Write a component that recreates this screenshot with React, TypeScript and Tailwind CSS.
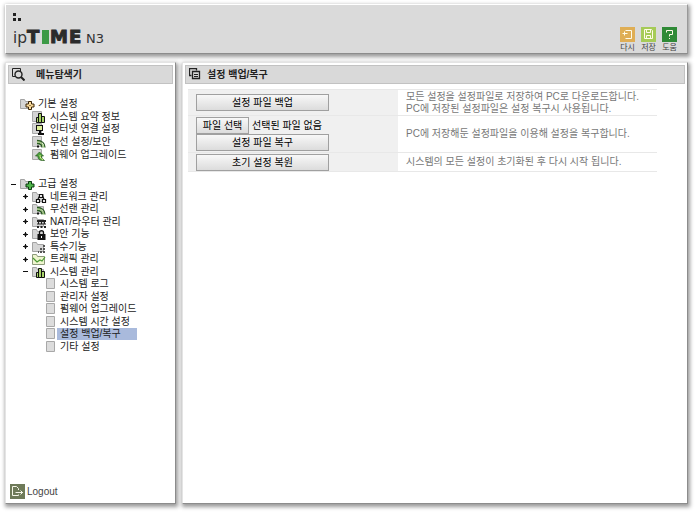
import type { ReactNode } from 'react';

const FONT = "font-['Liberation_Sans','Noto_Sans_CJK_KR',sans-serif]";

const Folder = () => (
  <path d="M.5 10.500v-9h4l1 2h6v7z" fill="#d5d5d5" stroke="#a3a3a3" />
);
const Sheet = () => <path d="M.5.500h9v10h-9z" fill="#d5d5d5" stroke="#a8a8a8" />;

function Bars() {
  return <path d="M4.500 11.500v-5h2v5zM6.500 11.500v-9h3v9zM9.500 11.500v-6h3v6z" fill="#a9d46a" stroke="#111" />;
}
function Waves() {
  return (
    <g fill="none" stroke="#2a5a22">
      <path d="M5 4.500c5 0 8 3 8 7M5 7.500c3 0 5 1.500 5 4" strokeWidth="1.300" />
      <path d="M5 6c4 0 6.500 2 6.500 5.500" stroke="#8fc95a" />
      <rect x="5" y="9.500" width="2" height="2" fill="#111" stroke="none" />
    </g>
  );
}

const glyphs: Record<string, ReactNode> = {
  basic: (
    <>
      <Folder />
      <path d="M8.500 3.500h3v2.500h2.500v3h-2.500v2.500h-3v-2.500H6v-3h2.500z" fill="#fbdc9c" stroke="#3a2508" />
      <path d="M9.500 7h1v1h-1z" fill="#3a2508" />
    </>
  ),
  advanced: (
    <>
      <Folder />
      <path d="M8.500 3.500h3v2.500h2.500v3h-2.500v2.500h-3v-2.500H6v-3h2.500z" fill="#4fb64a" stroke="#0d3b12" />
    </>
  ),
  summary: <><Sheet /><Bars /></>,
  internet: (
    <>
      <Sheet />
      <rect x="4.500" y="2.500" width="6" height="5" fill="#dff09a" stroke="#111" />
      <path d="M7 8h2v2h3v2H6v-2h1z" fill="#111" />
    </>
  ),
  wifiSetup: <><Sheet /><Waves /></>,
  firmware: (
    <>
      <Sheet />
      <path d="M7.500 3l4 4h-2c0 2 1 3 3 4.500-4 .5-7-1-6.500-4.500H3.500z" fill="#4fa33e" stroke="#24551c" strokeWidth=".7" />
      <path d="M8 6c0 2.500 1 4 3 5" stroke="#d8f08a" fill="none" />
    </>
  ),
  network: (
    <>
      <Folder />
      <path d="M7.500 3.500h3v3h-3zM4.500 8.500h3v3h-3zM10.500 8.500h3v3h-3zM6 8l1.500-3M12 8l-1.500-3" fill="#fff" stroke="#111" strokeWidth="1.200" />
    </>
  ),
  wireless: <><Folder /><Waves /></>,
  nat: (
    <>
      <Folder />
      <path d="M5 4h9v2H5zM5 7.500h9v1H5zM5 10h2v2H5zM8.500 10h2v2h-2zM12 10h2v2h-2zM6 6h1v2H6zM9 6h1v2H9zM12 6h1v2h-1z" fill="#222" />
    </>
  ),
  security: (
    <>
      <Folder />
      <path d="M7.500 6.500V4.500c0-2.500 4-2.500 4 0v2" fill="none" stroke="#111" strokeWidth="1.300" />
      <path d="M5.500 6h8v6h-8z" fill="#111" />
      <path d="M9 8h1v2H9z" fill="#fff" />
    </>
  ),
  special: (
    <>
      <Folder />
      <path d="M11 4h2v2h-2zM8 7h2v2H8zM11 7h2v2h-2zM6 10h1v2H6zM8 10h2v2H8zM11 10h2v2h-2z" fill="#555" />
    </>
  ),
  traffic: (
    <>
      <path d="M.5 11.500v-10h4l1 2h7v8z" fill="#eef5cf" stroke="#8c9a7a" />
      <path d="M1 5l4 4 3-2 2 1 3-4" fill="none" stroke="#4a9a32" strokeWidth="1.200" />
    </>
  ),
  system: <><Folder /><Bars /></>,
  page: <path d="M.5.500h8v10h-8z" fill="#dcdcdc" stroke="#a8a8a8" />,
};

type Node = { icon: string; label: string; level: 0 | 1 | 2; toggle?: '+' | '-'; active?: boolean };

const basicMenu: Node[] = [
  { icon: 'basic', label: '기본 설정', level: 0 },
  { icon: 'summary', label: '시스템 요약 정보', level: 1 },
  { icon: 'internet', label: '인터넷 연결 설정', level: 1 },
  { icon: 'wifiSetup', label: '무선 설정/보안', level: 1 },
  { icon: 'firmware', label: '펌웨어 업그레이드', level: 1 },
];

const advancedMenu: Node[] = [
  { icon: 'advanced', label: '고급 설정', level: 0, toggle: '-' },
  { icon: 'network', label: '네트워크 관리', level: 1, toggle: '+' },
  { icon: 'wireless', label: '무선랜 관리', level: 1, toggle: '+' },
  { icon: 'nat', label: 'NAT/라우터 관리', level: 1, toggle: '+' },
  { icon: 'security', label: '보안 기능', level: 1, toggle: '+' },
  { icon: 'special', label: '특수기능', level: 1, toggle: '+' },
  { icon: 'traffic', label: '트래픽 관리', level: 1, toggle: '+' },
  { icon: 'system', label: '시스템 관리', level: 1, toggle: '-' },
  { icon: 'page', label: '시스템 로그', level: 2 },
  { icon: 'page', label: '관리자 설정', level: 2 },
  { icon: 'page', label: '펌웨어 업그레이드', level: 2 },
  { icon: 'page', label: '시스템 시간 설정', level: 2 },
  { icon: 'page', label: '설정 백업/복구', level: 2, active: true },
  { icon: 'page', label: '기타 설정', level: 2 },
];

const indent = ['pl-0', 'pl-3', 'pl-[26px]'];

function Tree({ items, className }: { items: Node[]; className: string }) {
  return (
    <ul className={`grid auto-rows-fr ${className}`}>
      {items.map((n, i) => (
        <li key={i} className={`flex items-center ${indent[n.level]}`}>
          <span className="flex w-[10px] shrink-0">
            {n.toggle && (
              <button type="button" aria-label={`${n.label} 펼치기/접기`} className="p-px">
                <svg width="5" height="5" viewBox="0 0 5 5" fill="#111">
                  <path d={n.toggle === '+' ? 'M2 0h1v2h2v1H3v2H2V3H0V2h2z' : 'M0 2h5v1H0z'} />
                  {n.toggle === '+' && <path d="M1 1h3v3H1z" opacity=".45" />}
                </svg>
              </button>
            )}
          </span>
          <svg
            width={n.level === 2 ? 9 : 15}
            height="12"
            viewBox={n.level === 2 ? '0 0 9 12' : '0 0 15 12'}
            className="shrink-0"
            aria-hidden="true"
          >
            {glyphs[n.icon]}
          </svg>
          <a
            href="#"
            className={`px-[3px] leading-[12px] whitespace-nowrap text-[#222] ${n.level === 2 ? 'ml-[2px] w-[80px]' : ''} ${n.active ? 'bg-[#a9badc]' : ''}`}
          >
            {n.label}
          </a>
        </li>
      ))}
    </ul>
  );
}

const panel = 'bg-white border border-[#e4e4e4] border-r-[#8c8c8c] border-b-[#8c8c8c] shadow-[1px_2px_4px_1px_rgba(0,0,0,0.4)]';

function PanelTitle({ icon, gap, children }: { icon: ReactNode; gap: string; children: ReactNode }) {
  return (
    <div className={`flex h-[19px] items-center border border-[#c2c2c2] bg-[#d9d9d9] pl-[3px] ${gap}`}>
      <svg width="13" height="13" viewBox="0 0 13 13" fill="none" stroke="#222" aria-hidden="true">
        {icon}
      </svg>
      <h2 className="font-bold text-[#222]">{children}</h2>
    </div>
  );
}

const tools = [
  { label: '다시', box: 'bg-[#dfae55]', path: 'M5.500 3.500h6v8h-6M2.500 6.500h5M4.500 4.500v4' },
  { label: '저장', box: 'bg-[#a6cb57]', path: 'M3.500 2.500h7l1 1v8h-8zM5.500 2.500v3h4v-3M5.500 11.500v-3h4v3' },
  { label: '도움', box: 'bg-[#2f8a36]', path: 'M4.500 5.500v-2h6v4h-3v2M7.500 11v1' },
];

function WideButton({ children }: { children: ReactNode }) {
  return (
    <button
      type="button"
      className="block h-[17px] w-[133px] border border-[#a0a0a0] bg-linear-to-b from-[#f8f8f8] to-[#dcdcdc] leading-[15px] text-black"
    >
      {children}
    </button>
  );
}

export default function App() {
  return (
    <div className={`flex min-h-screen flex-col gap-2 bg-white pt-1 pr-3 pb-[10px] pl-[5px] text-[10px] leading-[12px] ${FONT}`}>
      <header className="flex h-[50px] justify-between border border-white border-r-[#999] border-b-[#8c8c8c] bg-[#dadada] pr-[10px] pl-[7px] shadow-[1px_2px_4px_1px_rgba(0,0,0,0.4)]">
        <div className="pt-2">
          <svg width="8" height="8" viewBox="0 0 8 8" fill="#222" aria-hidden="true">
            <path d="M0 0h3v3H0zM0 5h3v3H0zM5 5h3v3H5z" />
          </svg>
          <h1 className="flex items-baseline pt-[6px] leading-[20px] text-[#333]">
            <span className="font-['Noto_Sans'] text-[16px]">ip</span>
            <span className="flex gap-px font-['DejaVu_Sans'] text-[18px] font-bold text-[#2b2b2b] [-webkit-text-stroke:1px_#2b2b2b]">
              <span className="w-[14px]">T</span>
              <span className="my-[3px] w-[7px] bg-[#3c9a46] text-center leading-[14px] text-[#3c9a46]  [-webkit-text-stroke:0px]">I</span>
              <span className="w-[18px]">M</span>
              <span className="w-[14px]">E</span>
            </span>
            <span className="pl-[3px] font-['DejaVu_Sans'] text-[13px]">N3</span>
          </h1>
        </div>
        <div className="flex items-end gap-[6px]">
          {tools.map((t) => (
            <button key={t.label} type="button" className="flex w-[15px] flex-col items-center gap-px text-[8px] leading-[10px] text-[#444]">
              <span className={t.box}>
                <svg width="15" height="15" viewBox="0 0 15 15" fill="none" stroke="#fffbe8" aria-hidden="true">
                  <path d={t.path} />
                </svg>
              </span>
              <span className="whitespace-nowrap">{t.label}</span>
            </button>
          ))}
        </div>
      </header>

      <div className="flex flex-1 gap-[6px]">
        <aside className={`flex w-[171px] shrink-0 flex-col p-[2px] ${panel}`}>
          <PanelTitle
            gap="gap-[11px]"
            icon={
              <>
                <path d="M4 8.500H.5v-8h8V3" />
                <circle cx="6.500" cy="6.500" r="3.500" strokeWidth="1.400" />
                <path d="M9 9l3.500 3.500" strokeWidth="2" />
              </>
            }
          >
            메뉴탐색기
          </PanelTitle>
          <nav className="pt-[14px] pl-[2px]">
            <Tree items={basicMenu} className="h-[63px]" />
            <Tree items={advancedMenu} className="mt-[17px] h-[175px]" />
          </nav>
          <a href="#" className="mt-auto mb-[2px] flex items-center gap-[2px] self-start pl-[2px] text-[#444]">
            <svg width="15" height="15" viewBox="0 0 15 15" aria-hidden="true">
              <path d="M0 0h15v15H0z" fill="#6e7a59" />
              <path d="M8.500 6V4.500l-2-2h-4v9h6v-1M5.500 8.500H13M10.500 6.500l2 2-2 2" fill="none" stroke="#f5f5e8" />
            </svg>
            Logout
          </a>
        </aside>

        <main className={`min-w-0 flex-1 p-[2px] ${panel}`}>
          <PanelTitle
            gap="gap-[5px]"
            icon={
              <>
                <path d="M2.500 7.500h-2v-7h7v2" strokeWidth="1.300" />
                <path d="M3.500 3.500h7v7h-7z" strokeWidth="1.300" />
                <path d="M5 6.500h4M5 8.500h4" />
              </>
            }
          >
            설정 백업/복구
          </PanelTitle>
          <div className="pt-[5px] pr-7 pl-[3px]">
            <table className="w-full table-fixed border-collapse text-left text-[#777]">
              <colgroup>
                <col className="w-[210px]" />
                <col />
              </colgroup>
              <tbody>
                <tr className="h-[26px] border-y border-[#e8e8e8]">
                  <td className="bg-[#f0f0f0] pl-2">
                    <WideButton>설정 파일 백업</WideButton>
                  </td>
                  <td className="pl-2">
                    모든 설정을 설정파일로 저장하여 PC로 다운로드합니다.
                    <br />
                    PC에 저장된 설정파일은 설정 복구시 사용됩니다.
                  </td>
                </tr>
                <tr className="h-[37px] border-y border-[#e8e8e8]">
                  <td className="bg-[#f0f0f0] pl-2">
                    <div className="relative flex w-[133px] items-center gap-[3px] whitespace-nowrap text-black">
                      <label
                        htmlFor="backup-file"
                        className="h-[17px] w-[53px] border border-[#a0a0a0] bg-linear-to-b from-[#f8f8f8] to-[#dcdcdc] text-center leading-[15px]"
                      >
                        파일 선택
                      </label>
                      <span>선택된 파일 없음</span>
                      <input id="backup-file" type="file" className="absolute inset-0 opacity-0" />
                    </div>
                    <WideButton>설정 파일 복구</WideButton>
                  </td>
                  <td className="pl-2">PC에 저장해둔 설정파일을 이용해 설정을 복구합니다.</td>
                </tr>
                <tr className="h-[19px] border-y border-[#e8e8e8]">
                  <td className="bg-[#f0f0f0] pl-2">
                    <WideButton>초기 설정 복원</WideButton>
                  </td>
                  <td className="pl-2">시스템의 모든 설정이 초기화된 후 다시 시작 됩니다.</td>
                </tr>
              </tbody>
            </table>
          </div>
        </main>
      </div>
    </div>
  );
}
